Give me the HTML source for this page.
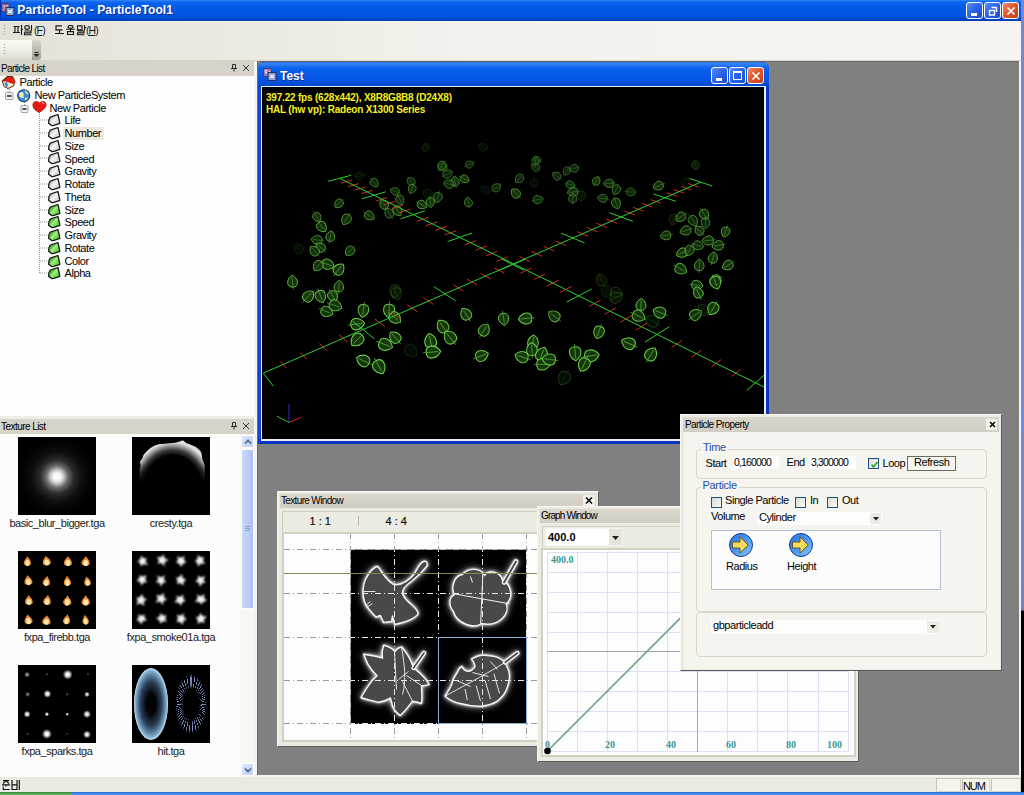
<!DOCTYPE html>
<html><head><meta charset="utf-8">
<style>
*{margin:0;padding:0;box-sizing:border-box}
html,body{width:1024px;height:795px;overflow:hidden;background:#808080;font-family:"Liberation Sans",sans-serif;font-size:11px;color:#000}
.a{position:absolute}
#title{left:0;top:0;width:1021px;height:21px;background:linear-gradient(#3d8af7 0,#1a72f4 1px,#0a62ee 3px,#0058e6 10px,#0052dc 17px,#0046c8 19px,#003cb4 21px)}
.xpb{width:17px;height:17px;border:1px solid #fff;border-radius:3px;background:linear-gradient(135deg,#5a8cf8,#2a62e8 50%,#1a4ad0)}
.sp{height:14px;border:1px solid;border-color:#c8c6b8 #d8d6ca #d8d6ca #c8c6b8;background:#f4f3ee}
#rframe{left:1021px;top:0;width:3px;height:792px;background:linear-gradient(#7886d2 0,#7a88d4 51%,#6c8ae6 52%,#6c8ae6 54.5%,#7886d2 55.5%,#7480cc 77%,#000 77.2%,#000 100%)}
#bars{left:0;top:21px;width:1021px;height:40px;background:linear-gradient(90deg,#e4e2d7 0,#ecebe2 25%,#f3f2ed 47%,#f6f5f1 100%)}
#mdi{left:257px;top:61px;width:762px;height:714px;background:#808080;border-left:1px solid #6c6c6c;border-top:1px solid #6c6c6c}
#mdiedge{left:1019px;top:61px;width:2px;height:714px;background:#f4f3ee}
#left{left:0;top:61px;width:254px;height:716px;background:#fff}
#split{left:254px;top:61px;width:3px;height:716px;background:#f4f3ee}
#status{left:0;top:777px;width:1021px;height:15px;background:linear-gradient(#ebeae1 0,#ecebe3)}
#task{left:0;top:792px;width:1024px;height:3px;background:#1a6ee0}
.hdr{background:#d7d3c8;height:15px;width:254px;left:0}
.tree{font-size:11px;letter-spacing:-0.45px;white-space:nowrap;line-height:13px;margin-left:0.6px}
.th{width:78px;height:78px}
.lbl{font-size:11px;letter-spacing:-0.45px;color:#222;text-align:center;white-space:nowrap;line-height:13px}
.win{background:#ecebe3;border:1px solid;border-color:#f8f7f3 #5e5d55 #5e5d55 #f8f7f3}
.ttl{background:linear-gradient(#dad6cc,#d2cec2)}
.ttl span{font-size:10px;letter-spacing:-0.65px;white-space:nowrap}
.tb{font-size:11px;letter-spacing:0px;color:#111;white-space:nowrap;-webkit-text-stroke:0.2px #111}
.grp{border:1px solid #d8d6ca;border-radius:4px}
.glbl{font-size:11px;color:#2250a8;background:#f5f4ef;padding:0 2px;letter-spacing:-0.3px;line-height:13px}
.dl{font-size:11px;letter-spacing:-0.45px;white-space:nowrap;line-height:14px}
.fld{height:13px;background:#fff;font-size:10.5px;letter-spacing:-0.85px;line-height:14px;padding-left:1px;white-space:nowrap}
.cb{width:11px;height:11px;border:1px solid #1c5180;background:linear-gradient(135deg,#dcdcd4,#fafaf8)}
.hdr span{position:absolute;left:2px;top:1px;font-size:11px;color:#000}
</style></head><body>
<div id="title" class="a"></div>
<div id="rframe" class="a"></div>
<div id="bars" class="a"></div>
<div id="mdi" class="a"></div>
<div id="mdiedge" class="a"></div>
<div id="left" class="a"></div>
<div id="split" class="a"></div>
<!-- LEFT PANEL -->
<div class="a hdr" style="top:61px"><span style="left:1px;top:2px;font-size:10px;letter-spacing:-0.62px">Particle List</span>
<svg class="a" style="left:227px;top:2px" width="24" height="11"><path d="M5.5 1.5h3M5.5 1.5v4M8.5 1.5v4M4 5.5h6M7 5.5v3" stroke="#2a2a2a" stroke-width="1" fill="none"/><path d="M16 2l6 6M22 2l-6 6" stroke="#3a3a3a" stroke-width="1"/></svg></div>
<div class="a" style="left:0;top:76px;width:254px;height:340px;background:#fdfdfd"></div>
<svg class="a" style="left:0;top:75px" width="254" height="210">
<defs>
<linearGradient id="gg" x1="0" y1="0" x2="1" y2="1"><stop offset="0" stop-color="#9a9a9a"/><stop offset=".5" stop-color="#f2f2f2"/><stop offset="1" stop-color="#bdbdbd"/></linearGradient>
<linearGradient id="gr" x1="0" y1="0" x2="1" y2="1"><stop offset="0" stop-color="#1c9a08"/><stop offset=".55" stop-color="#8ee868"/><stop offset="1" stop-color="#28b010"/></linearGradient>
<symbol id="lf" viewBox="0 0 13 13"><path d="M1.2 6.2L2.6 3.6L10.2 1L12.3 9.8L4.6 12.4L0.9 9.8Z" stroke="#1a1a1a" stroke-width="1.3" stroke-linejoin="round"/><path d="M3.5 9.5L9.5 3" stroke="#fff" stroke-opacity=".35" stroke-width="1.5"/></symbol>
</defs>
<g stroke="#9a9a9a" stroke-width="1" stroke-dasharray="1 1" fill="none">
<path d="M9.5 14v10M24.5 27v9M39.5 37v162M40 45h8M40 58h8M40 71h8M40 83h8M40 96h8M40 109h8M40 122h8M40 135h8M40 147h8M40 160h8M40 173h8M40 186h8M40 198h8"/>
</g>
<!-- expanders -->
<g><rect x="5.5" y="17.5" width="7.5" height="7" rx="1" fill="#eef0f2" stroke="#98a4b0"/><path d="M7 21h4.5" stroke="#222" stroke-width="1.5"/>
<rect x="21" y="30.5" width="7" height="7" rx="1" fill="#eef0f2" stroke="#98a4b0"/><path d="M22.5 34h4" stroke="#222" stroke-width="1.5"/></g>
<!-- Particle icon -->
<path d="M2.5 6.5L7.5 1.5L13 2L15 6.5L13.5 11L8 13.5L4 11.5Z" fill="#f4ecd8" stroke="#5a2a10" stroke-width="1"/>
<path d="M2.5 6.5L7.5 1.5L13 2L15 6.5L13.5 9L10 8L6 6.5Z" fill="#e02010"/><path d="M4.5 8l2.5 -1l1 4l-2 1z" fill="#3a80d8"/><path d="M2 6.5L7.5 1.5L13 2" stroke="#701800" stroke-width="1.2" fill="none"/>
<!-- globe -->
<circle cx="23.7" cy="20.7" r="6" fill="#3c8ad8" stroke="#123a70" stroke-width="1.1"/><path d="M19 18.5c1.5-2 3.5-2 4.5-0.5s-1 3 0.5 4.5c-1.5 1-3.5 0.5-4.8-1.2zM24.5 15.5c2 0 3.8 1.8 4 4c-1.2 0.2-2.2-0.8-2.5-1.8zM25 23c1 0 2.5-0.5 3-1.5c0 2-1.5 3.5-3 4z" fill="#f0eea0"/>
<!-- heart -->
<path d="M33 30.5c-0.5-3 2-4.5 4.5-3.8c1 0.3 1.5 0.8 2 1.3c1.5-1.8 4.5-2.3 6-0.3c1.2 1.8 0.5 4-1.2 5.8c-1.5 1.5-3.5 3-5.2 4c-2.2-1-4.5-2.8-5.5-4.5c-0.4-0.8-0.6-1.6-0.6-2.5z" fill="#e81810" stroke="#a01008" stroke-width="0.8"/><path d="M41.5 27.5c1.2 0 2.2 0.6 2.6 1.6" stroke="#ffb0a0" stroke-width="1.2" fill="none"/>
<g transform="translate(47.7,38.5)"><use href="#lf" width="13" height="13" fill="url(#gg)"/></g>
<g transform="translate(47.7,51.5)"><use href="#lf" width="13" height="13" fill="url(#gg)"/></g>
<g transform="translate(47.7,64.5)"><use href="#lf" width="13" height="13" fill="url(#gg)"/></g>
<g transform="translate(47.7,76.5)"><use href="#lf" width="13" height="13" fill="url(#gg)"/></g>
<g transform="translate(47.7,89.5)"><use href="#lf" width="13" height="13" fill="url(#gg)"/></g>
<g transform="translate(47.7,102.5)"><use href="#lf" width="13" height="13" fill="url(#gg)"/></g>
<g transform="translate(47.7,115.5)"><use href="#lf" width="13" height="13" fill="url(#gg)"/></g>
<g transform="translate(47.7,128.5)"><use href="#lf" width="13" height="13" fill="url(#gr)"/></g>
<g transform="translate(47.7,140.5)"><use href="#lf" width="13" height="13" fill="url(#gr)"/></g>
<g transform="translate(47.7,153.5)"><use href="#lf" width="13" height="13" fill="url(#gr)"/></g>
<g transform="translate(47.7,166.5)"><use href="#lf" width="13" height="13" fill="url(#gr)"/></g>
<g transform="translate(47.7,179.5)"><use href="#lf" width="13" height="13" fill="url(#gr)"/></g>
<g transform="translate(47.7,191.5)"><use href="#lf" width="13" height="13" fill="url(#gr)"/></g>
</svg>
<div class="a" style="left:63px;top:127px;width:41px;height:13px;background:#ebe9de"></div>
<div class="a tree" style="left:19px;top:76px">Particle</div>
<div class="a tree" style="left:34px;top:89px">New ParticleSystem</div>
<div class="a tree" style="left:49px;top:102px">New Particle</div>
<div class="a tree" style="left:64px;top:114px">Life</div>
<div class="a tree" style="left:64px;top:127px">Number</div>
<div class="a tree" style="left:64px;top:140px">Size</div>
<div class="a tree" style="left:64px;top:153px">Speed</div>
<div class="a tree" style="left:64px;top:165px">Gravity</div>
<div class="a tree" style="left:64px;top:178px">Rotate</div>
<div class="a tree" style="left:64px;top:191px">Theta</div>
<div class="a tree" style="left:64px;top:204px">Size</div>
<div class="a tree" style="left:64px;top:216px">Speed</div>
<div class="a tree" style="left:64px;top:229px">Gravity</div>
<div class="a tree" style="left:64px;top:242px">Rotate</div>
<div class="a tree" style="left:64px;top:255px">Color</div>
<div class="a tree" style="left:64px;top:267px">Alpha</div>

<div class="a" style="left:0;top:416px;width:254px;height:3px;background:#efeee6"></div>
<div class="a hdr" style="top:419px"><span style="left:1px;top:2px;font-size:10px;letter-spacing:-0.55px">Texture List</span>
<svg class="a" style="left:227px;top:2px" width="24" height="11"><path d="M5.5 1.5h3M5.5 1.5v4M8.5 1.5v4M4 5.5h6M7 5.5v3" stroke="#2a2a2a" stroke-width="1" fill="none"/><path d="M16 2l6 6M22 2l-6 6" stroke="#3a3a3a" stroke-width="1"/></svg></div>
<div class="a" style="left:0;top:434px;width:254px;height:343px;background:#fcfcfc"></div>
<!-- thumbnails -->
<div class="a th" style="left:18px;top:437px;background:radial-gradient(circle at 50% 51%,#fff 0,#f2f2f2 4px,#c0c0c0 7px,#6a6a6a 11px,#2a2a2a 17px,#0e0e0e 25px,#040404 33px,#000 40px)"></div>
<div class="a th" style="left:132px;top:437px;background:#000"><svg width="78" height="78" style="position:absolute;left:0;top:0"><defs><radialGradient id="cr" cx="40.5" cy="50" r="40" gradientUnits="userSpaceOnUse" gradientTransform="translate(40.5 50) scale(1 1.12) translate(-40.5 -50)"><stop offset="0" stop-color="#000"/><stop offset=".71" stop-color="#000"/><stop offset=".83" stop-color="#3c3c3c"/><stop offset=".93" stop-color="#a0a0a0"/><stop offset="1" stop-color="#e0e0e0"/></radialGradient><linearGradient id="crf" x1="0" y1="0" x2="0" y2="1"><stop offset="0" stop-color="#000" stop-opacity="0"/><stop offset=".55" stop-color="#000" stop-opacity="0"/><stop offset="1" stop-color="#000" stop-opacity="1"/></linearGradient></defs>
<path d="M7.7 46L7.7 33C8 30 9 29 8.5 27C8 26 8 25 8.2 24.5C10 22 11 21 11 19C12 17 13 16 14.4 14.7C17 12 20 10 22.7 8.6C25 7.5 27 7 28.9 7C35 6.5 40 6 44.3 5.5C47 5 49 3.5 50.5 3.4C52 3.5 53 5 54.1 6C58 7.5 61 8.5 63.9 10C66 12 68 13 69.1 15.2C70 18 70 20 70.1 21.4C71 24 72 26 72.7 28.6L72.5 46Z" fill="url(#cr)"/><rect x="0" y="0" width="78" height="47" fill="url(#crf)"/></svg></div>
<div class="a lbl" style="left:9px;top:517px;width:96px">basic_blur_bigger.tga</div>
<div class="a lbl" style="left:121px;top:517px;width:100px">cresty.tga</div>
<div class="a th" style="left:18px;top:551px;background:#000"><svg width="78" height="78" style="position:absolute;left:0;top:0"><defs><filter id="fb"><feGaussianBlur stdDeviation="0.6"/></filter></defs><g filter="url(#fb)"><g transform="translate(9.5 10.5) rotate(4)"><path d="M-3.6 2C-3.6 -2 -1 -3 -0.5 -5.6C1 -3 3.6 -2 3.6 2C3.6 5 -3.6 5 -3.6 2Z" fill="#e88a30"/><ellipse cx="0" cy="1.5" rx="2.1" ry="3.1" fill="#ffe4a8"/></g><g transform="translate(28.6 10.0) rotate(-8)"><path d="M-4.0 2C-4.0 -2 -1 -3 -0.5 -5.3C1 -3 4.0 -2 4.0 2C4.0 5 -4.0 5 -4.0 2Z" fill="#e88a30"/><ellipse cx="0" cy="1.5" rx="2.4" ry="2.9" fill="#ffe4a8"/></g><g transform="translate(50.0 10.5) rotate(4)"><path d="M-4.0 2C-4.0 -2 -1 -3 -0.5 -5.5C1 -3 4.0 -2 4.0 2C4.0 5 -4.0 5 -4.0 2Z" fill="#e88a30"/><ellipse cx="0" cy="1.5" rx="2.4" ry="3.0" fill="#ffe4a8"/></g><g transform="translate(67.8 10.6) rotate(7)"><path d="M-4.1 2C-4.1 -2 -1 -3 -0.5 -5.5C1 -3 4.1 -2 4.1 2C4.1 5 -4.1 5 -4.1 2Z" fill="#e88a30"/><ellipse cx="0" cy="1.5" rx="2.4" ry="3.0" fill="#ffe4a8"/></g><g transform="translate(10.3 29.6) rotate(-6)"><path d="M-4.0 2C-4.0 -2 -1 -3 -0.5 -5.6C1 -3 4.0 -2 4.0 2C4.0 5 -4.0 5 -4.0 2Z" fill="#e88a30"/><ellipse cx="0" cy="1.5" rx="2.4" ry="3.1" fill="#ffe4a8"/></g><g transform="translate(28.6 30.4) rotate(11)"><path d="M-3.7 2C-3.7 -2 -1 -3 -0.5 -5.7C1 -3 3.7 -2 3.7 2C3.7 5 -3.7 5 -3.7 2Z" fill="#e88a30"/><ellipse cx="0" cy="1.5" rx="2.2" ry="3.1" fill="#ffe4a8"/></g><g transform="translate(49.4 30.4) rotate(-2)"><path d="M-3.6 2C-3.6 -2 -1 -3 -0.5 -5.8C1 -3 3.6 -2 3.6 2C3.6 5 -3.6 5 -3.6 2Z" fill="#e88a30"/><ellipse cx="0" cy="1.5" rx="2.2" ry="3.2" fill="#ffe4a8"/></g><g transform="translate(69.4 30.4) rotate(-8)"><path d="M-3.3 2C-3.3 -2 -1 -3 -0.5 -5.1C1 -3 3.3 -2 3.3 2C3.3 5 -3.3 5 -3.3 2Z" fill="#e88a30"/><ellipse cx="0" cy="1.5" rx="2.0" ry="2.8" fill="#ffe4a8"/></g><g transform="translate(10.9 49.4) rotate(0)"><path d="M-3.8 2C-3.8 -2 -1 -3 -0.5 -5.3C1 -3 3.8 -2 3.8 2C3.8 5 -3.8 5 -3.8 2Z" fill="#e88a30"/><ellipse cx="0" cy="1.5" rx="2.3" ry="2.9" fill="#ffe4a8"/></g><g transform="translate(29.3 49.4) rotate(12)"><path d="M-3.8 2C-3.8 -2 -1 -3 -0.5 -5.6C1 -3 3.8 -2 3.8 2C3.8 5 -3.8 5 -3.8 2Z" fill="#e88a30"/><ellipse cx="0" cy="1.5" rx="2.3" ry="3.1" fill="#ffe4a8"/></g><g transform="translate(49.4 49.9) rotate(5)"><path d="M-4.1 2C-4.1 -2 -1 -3 -0.5 -6.0C1 -3 4.1 -2 4.1 2C4.1 5 -4.1 5 -4.1 2Z" fill="#e88a30"/><ellipse cx="0" cy="1.5" rx="2.4" ry="3.3" fill="#ffe4a8"/></g><g transform="translate(67.8 49.9) rotate(2)"><path d="M-4.2 2C-4.2 -2 -1 -3 -0.5 -5.9C1 -3 4.2 -2 4.2 2C4.2 5 -4.2 5 -4.2 2Z" fill="#e88a30"/><ellipse cx="0" cy="1.5" rx="2.5" ry="3.2" fill="#ffe4a8"/></g><g transform="translate(10.4 68.7) rotate(-6)"><path d="M-4.0 2C-4.0 -2 -1 -3 -0.5 -5.6C1 -3 4.0 -2 4.0 2C4.0 5 -4.0 5 -4.0 2Z" fill="#e88a30"/><ellipse cx="0" cy="1.5" rx="2.4" ry="3.1" fill="#ffe4a8"/></g><g transform="translate(28.6 69.4) rotate(9)"><path d="M-4.2 2C-4.2 -2 -1 -3 -0.5 -5.1C1 -3 4.2 -2 4.2 2C4.2 5 -4.2 5 -4.2 2Z" fill="#e88a30"/><ellipse cx="0" cy="1.5" rx="2.5" ry="2.8" fill="#ffe4a8"/></g><g transform="translate(48.8 68.7) rotate(11)"><path d="M-3.5 2C-3.5 -2 -1 -3 -0.5 -5.8C1 -3 3.5 -2 3.5 2C3.5 5 -3.5 5 -3.5 2Z" fill="#e88a30"/><ellipse cx="0" cy="1.5" rx="2.1" ry="3.2" fill="#ffe4a8"/></g><g transform="translate(67.6 69.1) rotate(-5)"><path d="M-3.2 2C-3.2 -2 -1 -3 -0.5 -5.7C1 -3 3.2 -2 3.2 2C3.2 5 -3.2 5 -3.2 2Z" fill="#e88a30"/><ellipse cx="0" cy="1.5" rx="1.9" ry="3.1" fill="#ffe4a8"/></g></g></svg></div>
<div class="a th" style="left:132px;top:551px;background:#000"><svg width="78" height="78" style="position:absolute;left:0;top:0"><defs><filter id="sm"><feGaussianBlur stdDeviation="1.3"/></filter></defs><g filter="url(#sm)" fill="#f0f0f0"><polygon points="15.9,14.2 11.5,13.1 9.0,15.2 8.0,12.1 5.5,10.2 8.3,8.6 8.9,4.8 11.6,7.2 14.9,7.2 13.4,10.3"/><polygon points="32.4,15.2 29.3,12.1 25.6,12.8 27.0,9.4 25.0,5.9 28.9,6.2 31.6,3.5 32.6,7.2 36.6,8.9 32.7,10.9"/><polygon points="54.2,11.5 51.0,12.7 49.0,15.7 47.1,12.4 44.0,11.5 46.0,9.0 45.3,5.1 48.8,7.1 52.4,4.9 51.9,8.8"/><polygon points="72.9,13.1 68.8,12.5 66.1,15.6 65.2,11.8 62.7,9.9 65.5,8.2 65.7,4.0 68.7,6.3 72.1,6.3 70.9,9.6"/><polygon points="15.1,31.2 11.6,31.4 9.3,34.6 8.1,30.8 4.6,29.7 7.2,27.2 7.8,24.2 10.6,25.6 14.5,24.3 13.1,28.2"/><polygon points="34.2,31.1 30.9,31.9 29.1,35.6 27.4,31.8 23.8,31.3 26.2,28.6 25.3,24.4 29.0,26.4 32.7,24.3 31.8,28.6"/><polygon points="51.3,34.4 48.2,32.1 45.0,32.9 45.6,29.7 44.0,26.7 47.2,26.2 49.8,23.0 50.8,27.2 54.2,28.4 51.7,30.8"/><polygon points="73.5,31.7 70.2,32.1 68.0,35.7 66.7,31.6 63.2,30.6 66.0,28.2 65.9,24.5 69.1,26.5 73.1,24.7 71.5,28.9"/><polygon points="12.2,55.1 8.7,52.2 4.6,53.8 5.8,49.7 4.4,46.7 7.7,46.2 10.2,42.9 11.5,46.9 15.0,48.3 11.8,50.6"/><polygon points="35.2,48.6 31.5,50.0 30.7,54.2 28.2,50.6 23.7,51.4 26.0,47.8 24.3,43.8 28.5,44.7 31.8,42.1 32.0,46.4"/><polygon points="53.6,50.1 50.4,51.3 48.8,54.8 46.7,51.5 42.3,51.5 45.1,48.2 44.5,44.7 47.9,46.0 51.5,43.4 51.1,47.6"/><polygon points="74.7,49.7 71.1,50.9 69.3,53.6 67.2,51.1 62.9,50.7 65.7,47.4 64.9,43.4 68.8,45.5 72.2,43.1 72.1,47.0"/><polygon points="14.8,69.6 11.0,70.1 9.1,73.4 7.3,70.3 4.4,69.1 6.7,66.7 6.3,63.3 9.3,64.8 12.4,63.5 12.6,66.6"/><polygon points="34.6,70.6 31.0,70.2 28.3,72.7 27.4,69.2 24.1,67.3 27.6,65.6 28.4,62.2 31.0,64.5 34.4,64.2 33.2,67.3"/><polygon points="54.7,68.3 51.6,69.8 50.6,73.7 48.0,70.9 44.4,70.7 46.0,67.5 44.8,63.8 48.7,64.8 51.6,62.6 52.0,66.2"/><polygon points="72.5,72.3 69.0,70.8 65.7,72.9 65.8,69.1 63.8,66.6 66.9,65.5 68.4,62.1 70.6,65.0 74.9,65.4 71.8,68.6"/></g></svg></div>
<div class="a lbl" style="left:9px;top:631px;width:96px">fxpa_firebb.tga</div>
<div class="a lbl" style="left:121px;top:631px;width:100px">fxpa_smoke01a.tga</div>
<div class="a th" style="left:18px;top:665px;background:radial-gradient(circle 3.0px at 9.1px 9.6px,#888 0,#888 30%,transparent 100%),radial-gradient(circle 1.5px at 28.9px 9.1px,#444 0,#444 30%,transparent 100%),radial-gradient(circle 5.0px at 49.7px 9.6px,#fff 0,#fff 30%,transparent 100%),radial-gradient(circle 1.5px at 70.0px 9.1px,#444 0,#444 30%,transparent 100%),radial-gradient(circle 2.5px at 9.6px 29.4px,#777 0,#777 30%,transparent 100%),radial-gradient(circle 4.0px at 29.4px 28.9px,#f4f4f4 0,#f4f4f4 30%,transparent 100%),radial-gradient(circle 1.5px at 49.2px 29.4px,#555 0,#555 30%,transparent 100%),radial-gradient(circle 2.8px at 69.0px 29.4px,#ddd 0,#ddd 30%,transparent 100%),radial-gradient(circle 3.5px at 9.1px 49.2px,#f0f0f0 0,#f0f0f0 30%,transparent 100%),radial-gradient(circle 2.2px at 28.9px 49.2px,#eee 0,#eee 30%,transparent 100%),radial-gradient(circle 1.8px at 49.2px 49.2px,#ddd 0,#ddd 30%,transparent 100%),radial-gradient(circle 4.0px at 69.0px 49.2px,#eee 0,#eee 30%,transparent 100%),radial-gradient(circle 1.5px at 9.6px 69.0px,#444 0,#444 30%,transparent 100%),radial-gradient(circle 5.0px at 28.9px 69.0px,#fff 0,#fff 30%,transparent 100%),radial-gradient(circle 1.5px at 49.2px 69.0px,#333 0,#333 30%,transparent 100%),radial-gradient(circle 4.0px at 69.0px 69.5px,#e8e8e8 0,#e8e8e8 30%,transparent 100%),#000"></div>
<div class="a th" style="left:132px;top:665px;background:#000;overflow:hidden">
 <div class="a" style="left:1.5px;top:3px;width:34.5px;height:72px;border-radius:50%;background:radial-gradient(ellipse 50% 50% at 50% 50%,#000 0,#03070c 30%,#2a4058 62%,#6890b0 84%,#9ac0dc 95%,#e0f0ff 100%);"></div>
 <div class="a" style="left:43px;top:9px;width:31.5px;height:60px;border-radius:50%;background:repeating-conic-gradient(from 0deg,#8098d0 0 2deg,transparent 2deg 7deg);-webkit-mask:radial-gradient(ellipse 50% 50%,transparent 50%,rgba(0,0,0,.8) 64%,#000 85%,transparent 100%)"></div>
</div>
<div class="a lbl" style="left:9px;top:745px;width:96px">fxpa_sparks.tga</div>
<div class="a lbl" style="left:121px;top:745px;width:100px">hit.tga</div>
<!-- scrollbar -->
<div class="a" style="left:240px;top:434px;width:14px;height:343px;background:#f7f7f3"></div>
<div class="a" style="left:241px;top:435px;width:13px;height:13px;border-radius:2px;background:linear-gradient(135deg,#dde8fb,#b8cdf5);border:1px solid #fff"><svg class="a" style="left:2px;top:3px" width="8" height="6"><path d="M1 4.5L4 1.5L7 4.5" stroke="#4d6185" stroke-width="1.6" fill="none"/></svg></div>
<div class="a" style="left:241px;top:449px;width:13px;height:160px;border-radius:2px;background:linear-gradient(90deg,#c9d8fa,#b9cdf6 60%,#a9bff0);border:1px solid #fff"><div class="a" style="left:3px;top:76px;width:5px;height:6px;background:repeating-linear-gradient(#8aa0d0 0 1px,transparent 1px 2px)"></div></div>
<div class="a" style="left:241px;top:763px;width:13px;height:13px;border-radius:2px;background:linear-gradient(135deg,#dde8fb,#b8cdf5);border:1px solid #fff"><svg class="a" style="left:2px;top:3px" width="8" height="6"><path d="M1 1.5L4 4.5L7 1.5" stroke="#4d6185" stroke-width="1.6" fill="none"/></svg></div>

<div id="status" class="a"></div>
<div class="a" style="left:257px;top:775px;width:764px;height:2px;background:#f7f6f2"></div>
<!-- TITLE -->
<div class="a" style="left:0;top:0;width:1px;height:21px;background:#0030b0"></div>
<svg class="a" style="left:1px;top:3px" width="14" height="13">
<rect x="0.5" y="0.5" width="8" height="8" fill="#8a6a9a" stroke="#5a3a6a"/><path d="M2 3h2M5 3h2M3 5h3M2 7h1M6 7h1" stroke="#f0e0f0"/>
<rect x="5" y="4.5" width="8" height="8" fill="#8fa0c8" stroke="#20306a"/><path d="M7 7l4 3M11 7l-4 3" stroke="#f4f8ff" stroke-width="1.2"/>
</svg>
<div class="a" style="left:17.3px;top:3px;font-size:12px;font-weight:bold;color:#fff;white-space:nowrap;letter-spacing:0.1px;text-shadow:1px 1px 0 #0a2a90">ParticleTool - ParticleTool1</div>
<!-- title buttons -->
<div class="a xpb" style="left:966px;top:2px"><div class="a" style="left:4px;top:10px;width:6px;height:3px;background:#fff"></div></div>
<div class="a xpb" style="left:984px;top:2px"><svg class="a" style="left:3px;top:3px" width="10" height="10"><path d="M3.5 1.5h5v4.5M1.5 4.5h5v4.5h-5z" stroke="#fff" stroke-width="1.4" fill="none"/></svg></div>
<div class="a xpb" style="left:1002px;top:2px;background:linear-gradient(135deg,#f08a6a,#e05a30 45%,#c83a10)"><svg class="a" style="left:3px;top:3px" width="10" height="10"><path d="M1.5 1.5l7 7M8.5 1.5l-7 7" stroke="#fff" stroke-width="1.7"/></svg></div>
<!-- MENU / TOOLBAR -->
<div class="a" style="left:0;top:21px;width:1021px;height:1px;background:#f4f3ee"></div>
<div class="a" style="left:0;top:60px;width:1021px;height:1px;background:#d8d6cb"></div>
<svg class="a" style="left:3px;top:24px" width="3" height="12"><path d="M1.5 1v1M1.5 4v1M1.5 7v1M1.5 10v1" stroke="#a8a79a" stroke-width="1.3"/></svg>
<svg class="a" style="left:13px;top:25px" width="32" height="11" fill="none" stroke="#1a1a1a" stroke-width="1.15">
<path d="M0.5 1.5h6M2 1.5v6M5 1.5v6M0 7.5h7M8.5 0v10M8.5 4.5h1.5"/>
<ellipse cx="14" cy="2.5" rx="2.3" ry="1.9"/><path d="M18.5 0v5.5M11.5 6h6.5v1.8h-6.5v1.9h7"/>
</svg>
<div class="a" style="left:34px;top:24px;font-size:10.5px;letter-spacing:-0.9px;white-space:nowrap;color:#1a1a1a">(<u>F</u>)</div>
<svg class="a" style="left:55px;top:25px" width="32" height="11" fill="none" stroke="#1a1a1a" stroke-width="1.15">
<path d="M7 0.8h-6v4h6.5M4.5 5v3M0 8.5h9"/>
<ellipse cx="15.5" cy="1.8" rx="2.5" ry="1.5"/><path d="M11 4.2h9M15.5 4.2v1.8M12.5 6.6h6v2.9h-6z"/>
<path d="M22.5 0.8h4.5v4h-4.5zM29.5 0v5.5M29.5 2.6h1.8M22.5 6h6.5v1.8h-6.5v1.9h7"/>
</svg>
<div class="a" style="left:86px;top:24px;font-size:10.5px;letter-spacing:-0.9px;white-space:nowrap;color:#1a1a1a">(<u>H</u>)</div>
<!-- tiny toolbar -->
<div class="a" style="left:0;top:40px;width:41px;height:20px;border-radius:0 3px 3px 0;background:linear-gradient(#fbfbf6,#f0efe6 50%,#d9d8cb);overflow:hidden">
 <div class="a" style="left:32px;top:0;width:9px;height:20px;background:linear-gradient(#d8d7c8,#b8b7a6 60%,#a3a290)"></div>
 <svg class="a" style="left:33px;top:11px" width="7" height="7"><path d="M1.5 1.5h4" stroke="#222"/><path d="M0.5 3h6l-3 3z" fill="#222"/></svg>
 <svg class="a" style="left:3px;top:42px" width="3" height="14"></svg>
</div>
<svg class="a" style="left:3px;top:43px" width="3" height="14"><path d="M1.5 1v1M1.5 4v1M1.5 7v1M1.5 10v1" stroke="#a8a79a" stroke-width="1.3"/></svg>
<!-- STATUS -->
<svg class="a" style="left:2px;top:780px" width="18" height="10" fill="none" stroke="#111" stroke-width="1.15">
<path d="M1 0.6h6M4 0.6L1 3.6M4 0.6l3 3M0 4.8h8M4 4.8v1.6M1.2 6.5v3h6.5"/>
<path d="M10 0v9.5h5v-9.5M10 4.8h5M17.3 0v10"/>
</svg>
<div class="a sp" style="left:936px;top:778px;width:25px"></div>
<div class="a sp" style="left:962px;top:778px;width:28px"><span class="a" style="left:0px;top:0.5px;font-size:11px;letter-spacing:-1.1px">NUM</span></div>
<div class="a sp" style="left:991px;top:778px;width:30px"></div>
<div class="a" style="left:0;top:792px;width:72px;height:3px;background:linear-gradient(#2e7a2e 0,#4aa04a 1px,#6ab86a)"></div>
<div class="a" style="left:72px;top:792px;width:952px;height:3px;background:linear-gradient(#1e5ec8 0,#3a86e8 1px,#4a90ee)"></div>


<!-- TEST WINDOW -->
<div class="a" style="left:258px;top:62px;width:511px;height:382px;border-radius:6px 6px 0 0;background:linear-gradient(90deg,#0a30b0 0,#1a50e0 1px,#0c3cd0 3px,#0a36c8 4px,#0a36c8 calc(100% - 4px),#0c3cd0 calc(100% - 3px),#0a30b0 100%);overflow:hidden">
 <div class="a" style="left:0;top:0;width:511px;height:25px;background:linear-gradient(#1a4ac8 0,#3c8cf8 1px,#2a78f4 3px,#0a62ee 6px,#0658e8 14px,#0552e0 20px,#0446cc 24px,#0a40c0 25px)"></div>
 <div class="a" style="left:0;top:377px;width:511px;height:5px;background:linear-gradient(#0c3cd0,#0a36c8 3px,#0a30b0)"></div>
</div>
<div class="a" style="left:261px;top:86px;width:505px;height:355px;background:#e8ecf8"></div>
<svg class="a" style="left:263px;top:68px" width="14" height="13">
<rect x="0.5" y="0.5" width="8" height="8" fill="#9a78b0" stroke="#5a3a7a"/><path d="M2 3.5l2-1.5M2 3.5l2 2M5 4h2" stroke="#f8f0ff" stroke-width="1.1"/>
<rect x="5" y="4.5" width="8" height="8" fill="#8fa0d0" stroke="#20306a"/><path d="M7 7l4 3M11 7l-4 3" stroke="#f4f8ff" stroke-width="1.2"/>
</svg>
<div class="a" style="left:280px;top:69px;font-size:12px;font-weight:bold;color:#fff;white-space:nowrap;text-shadow:1px 1px 0 #0a2a90">Test</div>
<div class="a xpb" style="left:711px;top:67px"><div class="a" style="left:4px;top:10px;width:6px;height:3px;background:#fff"></div></div>
<div class="a xpb" style="left:729px;top:67px"><div class="a" style="left:3px;top:3px;width:9px;height:9px;border:1px solid #fff;border-top-width:2px"></div></div>
<div class="a xpb" style="left:747px;top:67px;background:linear-gradient(135deg,#f08a6a,#e05a30 45%,#c83a10)"><svg class="a" style="left:3px;top:3px" width="10" height="10"><path d="M1.5 1.5l7 7M8.5 1.5l-7 7" stroke="#fff" stroke-width="1.7"/></svg></div>
<div class="a" style="left:262px;top:87px;width:502px;height:352px;background:#000;overflow:hidden">
<svg class="a" style="left:0;top:0" width="502" height="352" id="scene"><defs><filter id="lb" x="-10%" y="-10%" width="120%" height="120%"><feGaussianBlur stdDeviation="0.35"/></filter><g id="leaf"><path d="M-6.5 0C-6.5 -7.5 3 -7.8 7.5 0C3 7.8 -6.5 7.5 -6.5 0Z" fill="#17380f" stroke="#6ccc48" stroke-width="1.05"/><path d="M-9.5 0H5" stroke="#52a836" stroke-width="0.8"/></g></defs>
<g filter="url(#lb)"><use href="#leaf" transform="translate(163.6 60.3) rotate(-63) scale(0.59)" opacity="0.25"/><use href="#leaf" transform="translate(221.0 60.0) rotate(-154) scale(0.63)" opacity="0.21"/><use href="#leaf" transform="translate(180.7 79.9) rotate(-159) scale(0.67)" opacity="0.59"/><use href="#leaf" transform="translate(207.5 77.4) rotate(-24) scale(0.61)" opacity="0.60"/><use href="#leaf" transform="translate(185.5 87.0) rotate(-27) scale(0.71)" opacity="0.62"/><use href="#leaf" transform="translate(193.0 94.5) rotate(-100) scale(0.70)" opacity="0.80"/><use href="#leaf" transform="translate(202.6 92.0) rotate(28) scale(0.67)" opacity="0.80"/><use href="#leaf" transform="translate(186.8 97.0) rotate(-163) scale(0.73)" opacity="0.68"/><use href="#leaf" transform="translate(149.0 94.5) rotate(-128) scale(0.65)" opacity="0.67"/><use href="#leaf" transform="translate(150.0 101.8) rotate(114) scale(0.67)" opacity="0.74"/><use href="#leaf" transform="translate(112.3 95.7) rotate(50) scale(0.68)" opacity="0.72"/><use href="#leaf" transform="translate(133.0 104.3) rotate(-157) scale(0.66)" opacity="0.67"/><use href="#leaf" transform="translate(138.0 112.8) rotate(65) scale(0.71)" opacity="0.71"/><use href="#leaf" transform="translate(166.0 106.7) rotate(31) scale(0.71)" opacity="0.20"/><use href="#leaf" transform="translate(175.8 110.4) rotate(106) scale(0.74)" opacity="0.69"/><use href="#leaf" transform="translate(159.9 117.7) rotate(27) scale(0.73)" opacity="0.83"/><use href="#leaf" transform="translate(168.5 115.3) rotate(83) scale(0.70)" opacity="0.85"/><use href="#leaf" transform="translate(122.0 117.7) rotate(-137) scale(0.72)" opacity="0.81"/><use href="#leaf" transform="translate(127.0 126.2) rotate(-125) scale(0.74)" opacity="0.68"/><use href="#leaf" transform="translate(135.5 123.8) rotate(61) scale(0.77)" opacity="0.79"/><use href="#leaf" transform="translate(76.9 116.5) rotate(135) scale(0.71)" opacity="0.80"/><use href="#leaf" transform="translate(107.4 128.7) rotate(34) scale(0.76)" opacity="0.77"/><use href="#leaf" transform="translate(84.2 132.3) rotate(122) scale(0.81)" opacity="0.78"/><use href="#leaf" transform="translate(55.0 130.0) rotate(59) scale(0.70)" opacity="0.82"/><use href="#leaf" transform="translate(59.8 139.7) rotate(53) scale(0.82)" opacity="0.87"/><use href="#leaf" transform="translate(68.4 149.4) rotate(-78) scale(0.77)" opacity="0.86"/><use href="#leaf" transform="translate(55.0 153.0) rotate(-172) scale(0.79)" opacity="0.76"/><use href="#leaf" transform="translate(58.6 160.4) rotate(-138) scale(0.76)" opacity="0.90"/><use href="#leaf" transform="translate(52.5 164.0) rotate(-133) scale(0.78)" opacity="0.83"/><use href="#leaf" transform="translate(87.9 164.0) rotate(134) scale(0.77)" opacity="0.84"/><use href="#leaf" transform="translate(65.9 177.5) rotate(18) scale(0.88)" opacity="0.94"/><use href="#leaf" transform="translate(56.0 178.7) rotate(131) scale(0.81)" opacity="0.86"/><use href="#leaf" transform="translate(76.9 182.4) rotate(-51) scale(0.89)" opacity="0.98"/><use href="#leaf" transform="translate(36.6 161.6) rotate(-126) scale(0.77)" opacity="0.19"/><use href="#leaf" transform="translate(30.5 194.6) rotate(-96) scale(0.86)" opacity="0.93"/><use href="#leaf" transform="translate(76.9 199.5) rotate(-85) scale(0.82)" opacity="0.91"/><use href="#leaf" transform="translate(46.4 209.2) rotate(-47) scale(0.90)" opacity="1.00"/><use href="#leaf" transform="translate(58.6 209.2) rotate(69) scale(0.89)" opacity="0.97"/><use href="#leaf" transform="translate(70.8 209.2) rotate(63) scale(0.84)" opacity="1.00"/><use href="#leaf" transform="translate(133.0 204.0) rotate(101) scale(0.92)" opacity="0.27"/><use href="#leaf" transform="translate(234.4 100.6) rotate(-39) scale(0.69)" opacity="0.65"/><use href="#leaf" transform="translate(223.4 103.0) rotate(48) scale(0.66)" opacity="0.17"/><use href="#leaf" transform="translate(206.3 115.3) rotate(-105) scale(0.69)" opacity="0.72"/><use href="#leaf" transform="translate(274.8 72.9) rotate(-161) scale(0.60)" opacity="0.60"/><use href="#leaf" transform="translate(273.6 80.3) rotate(-143) scale(0.65)" opacity="0.59"/><use href="#leaf" transform="translate(257.4 91.5) rotate(135) scale(0.70)" opacity="0.64"/><use href="#leaf" transform="translate(272.3 95.2) rotate(-89) scale(0.67)" opacity="0.21"/><use href="#leaf" transform="translate(253.7 106.3) rotate(-136) scale(0.75)" opacity="0.84"/><use href="#leaf" transform="translate(276.0 112.6) rotate(-12) scale(0.72)" opacity="0.67"/><use href="#leaf" transform="translate(294.7 89.0) rotate(-143) scale(0.66)" opacity="0.65"/><use href="#leaf" transform="translate(304.6 84.0) rotate(118) scale(0.63)" opacity="0.60"/><use href="#leaf" transform="translate(312.0 81.5) rotate(162) scale(0.67)" opacity="0.62"/><use href="#leaf" transform="translate(308.3 97.7) rotate(16) scale(0.64)" opacity="0.73"/><use href="#leaf" transform="translate(310.8 105.0) rotate(172) scale(0.75)" opacity="0.77"/><use href="#leaf" transform="translate(310.8 111.3) rotate(-86) scale(0.70)" opacity="0.68"/><use href="#leaf" transform="translate(319.5 108.8) rotate(98) scale(0.72)" opacity="0.27"/><use href="#leaf" transform="translate(334.4 94.0) rotate(-61) scale(0.66)" opacity="0.77"/><use href="#leaf" transform="translate(346.8 96.4) rotate(175) scale(0.73)" opacity="0.78"/><use href="#leaf" transform="translate(354.2 102.6) rotate(115) scale(0.73)" opacity="0.67"/><use href="#leaf" transform="translate(369.0 105.0) rotate(6) scale(0.69)" opacity="0.64"/><use href="#leaf" transform="translate(340.6 111.3) rotate(-170) scale(0.70)" opacity="0.70"/><use href="#leaf" transform="translate(354.2 116.3) rotate(69) scale(0.78)" opacity="0.75"/><use href="#leaf" transform="translate(396.4 98.9) rotate(157) scale(0.75)" opacity="0.81"/><use href="#leaf" transform="translate(423.7 95.2) rotate(-49) scale(0.66)" opacity="0.19"/><use href="#leaf" transform="translate(433.6 77.8) rotate(-109) scale(0.63)" opacity="0.25"/><use href="#leaf" transform="translate(418.7 130.0) rotate(144) scale(0.79)" opacity="0.78"/><use href="#leaf" transform="translate(431.1 133.6) rotate(55) scale(0.79)" opacity="0.71"/><use href="#leaf" transform="translate(442.3 127.4) rotate(58) scale(0.79)" opacity="0.84"/><use href="#leaf" transform="translate(443.5 136.0) rotate(90) scale(0.76)" opacity="0.73"/><use href="#leaf" transform="translate(411.3 132.4) rotate(104) scale(0.74)" opacity="0.27"/><use href="#leaf" transform="translate(403.8 148.5) rotate(170) scale(0.77)" opacity="0.80"/><use href="#leaf" transform="translate(423.7 143.6) rotate(161) scale(0.80)" opacity="0.75"/><use href="#leaf" transform="translate(437.3 143.6) rotate(-134) scale(0.74)" opacity="0.89"/><use href="#leaf" transform="translate(463.4 144.8) rotate(110) scale(0.74)" opacity="0.88"/><use href="#leaf" transform="translate(446.0 153.5) rotate(173) scale(0.81)" opacity="0.80"/><use href="#leaf" transform="translate(436.1 158.5) rotate(18) scale(0.76)" opacity="0.74"/><use href="#leaf" transform="translate(456.0 158.5) rotate(170) scale(0.82)" opacity="0.85"/><use href="#leaf" transform="translate(420.0 165.9) rotate(156) scale(0.81)" opacity="0.93"/><use href="#leaf" transform="translate(427.4 163.4) rotate(117) scale(0.78)" opacity="0.80"/><use href="#leaf" transform="translate(451.0 170.9) rotate(-75) scale(0.80)" opacity="0.88"/><use href="#leaf" transform="translate(437.3 178.3) rotate(-87) scale(0.83)" opacity="0.81"/><use href="#leaf" transform="translate(465.9 178.3) rotate(148) scale(0.82)" opacity="0.87"/><use href="#leaf" transform="translate(418.7 182.0) rotate(30) scale(0.89)" opacity="0.87"/><use href="#leaf" transform="translate(453.5 193.2) rotate(150) scale(0.86)" opacity="0.92"/><use href="#leaf" transform="translate(434.9 198.2) rotate(8) scale(0.82)" opacity="0.91"/><use href="#leaf" transform="translate(436.1 205.6) rotate(-114) scale(0.83)" opacity="1.00"/><use href="#leaf" transform="translate(339.3 193.2) rotate(-118) scale(0.86)" opacity="0.26"/><use href="#leaf" transform="translate(354.2 205.6) rotate(20) scale(0.87)" opacity="0.23"/><use href="#leaf" transform="translate(73.2 218.6) rotate(20) scale(0.94)" opacity="0.88"/><use href="#leaf" transform="translate(64.7 224.7) rotate(22) scale(0.89)" opacity="0.93"/><use href="#leaf" transform="translate(101.3 223.5) rotate(98) scale(0.92)" opacity="0.98"/><use href="#leaf" transform="translate(127.0 223.5) rotate(94) scale(0.96)" opacity="0.96"/><use href="#leaf" transform="translate(133.0 230.8) rotate(41) scale(0.93)" opacity="0.99"/><use href="#leaf" transform="translate(134.3 206.4) rotate(69) scale(0.88)" opacity="0.23"/><use href="#leaf" transform="translate(95.2 237.0) rotate(-8) scale(0.99)" opacity="1.00"/><use href="#leaf" transform="translate(95.2 252.8) rotate(136) scale(1.02)" opacity="0.98"/><use href="#leaf" transform="translate(123.3 257.7) rotate(21) scale(1.02)" opacity="1.00"/><use href="#leaf" transform="translate(133.0 250.4) rotate(-131) scale(0.92)" opacity="1.00"/><use href="#leaf" transform="translate(101.3 273.6) rotate(-154) scale(0.98)" opacity="0.99"/><use href="#leaf" transform="translate(117.2 279.7) rotate(61) scale(1.05)" opacity="1.00"/><use href="#leaf" transform="translate(180.7 239.4) rotate(-124) scale(0.97)" opacity="1.00"/><use href="#leaf" transform="translate(188.0 250.4) rotate(-129) scale(1.01)" opacity="1.00"/><use href="#leaf" transform="translate(168.5 254.0) rotate(-101) scale(1.02)" opacity="1.00"/><use href="#leaf" transform="translate(170.9 265.0) rotate(-5) scale(1.04)" opacity="1.00"/><use href="#leaf" transform="translate(203.9 227.2) rotate(-122) scale(0.91)" opacity="0.98"/><use href="#leaf" transform="translate(222.2 243.0) rotate(-58) scale(0.92)" opacity="0.97"/><use href="#leaf" transform="translate(241.7 232.0) rotate(80) scale(0.88)" opacity="1.00"/><use href="#leaf" transform="translate(219.7 268.7) rotate(-21) scale(0.94)" opacity="1.00"/><use href="#leaf" transform="translate(148.9 263.8) rotate(45) scale(0.99)" opacity="0.17"/><use href="#leaf" transform="translate(263.6 231.5) rotate(175) scale(0.96)" opacity="1.00"/><use href="#leaf" transform="translate(292.2 229.0) rotate(-142) scale(0.90)" opacity="0.89"/><use href="#leaf" transform="translate(344.3 204.2) rotate(100) scale(0.86)" opacity="0.18"/><use href="#leaf" transform="translate(354.2 210.4) rotate(-28) scale(0.94)" opacity="0.27"/><use href="#leaf" transform="translate(379.0 217.8) rotate(-87) scale(0.87)" opacity="1.00"/><use href="#leaf" transform="translate(376.5 229.0) rotate(25) scale(0.95)" opacity="0.90"/><use href="#leaf" transform="translate(397.6 225.3) rotate(-159) scale(0.94)" opacity="0.96"/><use href="#leaf" transform="translate(390.2 234.0) rotate(-154) scale(0.98)" opacity="0.25"/><use href="#leaf" transform="translate(336.8 245.1) rotate(109) scale(0.91)" opacity="1.00"/><use href="#leaf" transform="translate(366.6 256.3) rotate(-156) scale(1.01)" opacity="1.00"/><use href="#leaf" transform="translate(389.0 267.4) rotate(-58) scale(1.00)" opacity="1.00"/><use href="#leaf" transform="translate(271.1 255.0) rotate(-84) scale(0.93)" opacity="1.00"/><use href="#leaf" transform="translate(269.9 262.5) rotate(-94) scale(0.94)" opacity="0.98"/><use href="#leaf" transform="translate(259.9 269.9) rotate(-162) scale(0.96)" opacity="1.00"/><use href="#leaf" transform="translate(279.8 267.4) rotate(-70) scale(1.02)" opacity="1.00"/><use href="#leaf" transform="translate(281.0 277.4) rotate(0) scale(0.97)" opacity="1.00"/><use href="#leaf" transform="translate(287.2 272.4) rotate(-173) scale(0.97)" opacity="0.97"/><use href="#leaf" transform="translate(313.3 266.2) rotate(84) scale(1.00)" opacity="0.99"/><use href="#leaf" transform="translate(329.4 268.7) rotate(-9) scale(1.04)" opacity="0.98"/><use href="#leaf" transform="translate(322.0 277.4) rotate(115) scale(1.00)" opacity="1.00"/><use href="#leaf" transform="translate(302.1 291.0) rotate(120) scale(1.02)" opacity="0.23"/><use href="#leaf" transform="translate(453.5 195.5) rotate(68) scale(0.92)" opacity="0.88"/><use href="#leaf" transform="translate(451.0 221.5) rotate(120) scale(0.94)" opacity="0.99"/><use href="#leaf" transform="translate(433.6 227.7) rotate(-34) scale(0.91)" opacity="0.89"/><use href="#leaf" transform="translate(441.0 222.8) rotate(-133) scale(0.87)" opacity="0.26"/><use href="#leaf" transform="translate(273.4 73.9) rotate(-88) scale(0.62)" opacity="0.59"/><use href="#leaf" transform="translate(179.8 78.8) rotate(123) scale(0.70)" opacity="0.72"/><use href="#leaf" transform="translate(433.5 77.8) rotate(-79) scale(0.63)" opacity="0.20"/><use href="#leaf" transform="translate(98.0 89.0) rotate(-15) scale(0.64)" opacity="0.22"/></g>
<path d="M79.1 96.1l10.7 -2.9M85.9 99.6l10.8 -2.9M92.7 103.0l10.9 -3.0M99.5 106.5l10.9 -3.1M114.1 113.9l11.1 -3.3M121.9 117.8l11.1 -3.4M129.7 121.7l11.2 -3.5M137.5 125.7l11.2 -3.6M154.6 134.2l11.3 -3.7M164.0 138.7l11.3 -3.8M173.4 143.2l11.3 -3.8M182.8 147.8l11.3 -3.9M202.8 157.8l11.3 -4.1M213.4 163.3l11.3 -4.3M224.0 168.9l11.3 -4.5M234.6 174.4l11.3 -4.7M258.4 186.2l11.3 -5.1M271.7 192.5l11.4 -5.3M284.9 198.9l11.4 -5.5M298.2 205.2l11.5 -5.8M327.1 219.4l11.5 -6.2M342.7 227.3l11.4 -6.5M358.3 235.2l11.4 -6.7M373.9 243.1l11.3 -6.9M409.5 260.6l10.7 -7.2M429.5 270.3l10.1 -7.2M449.6 279.9l9.5 -7.3M469.6 289.5l8.9 -7.3M18.5 274.3l5.7 6.4M38.0 265.4l6.8 6.9M57.5 256.6l7.8 7.3M77.0 247.7l8.9 7.7M112.8 231.8l10.0 7.8M129.0 224.7l10.0 7.5M145.2 217.7l10.0 7.1M161.5 210.6l9.9 6.8M191.3 197.8l10.0 6.2M204.9 192.0l10.1 6.0M218.5 186.3l10.2 5.8M232.0 180.6l10.3 5.5M257.6 169.6l10.5 5.2M269.5 164.4l10.6 5.0M281.5 159.2l10.7 4.9M293.4 153.9l10.8 4.7M315.1 144.6l10.9 4.5M324.7 140.4l10.9 4.4M334.4 136.3l10.9 4.2M344.1 132.1l10.9 4.1M362.5 124.2l10.7 3.9M371.2 120.4l10.6 3.8M380.0 116.5l10.5 3.6M388.7 112.7l10.4 3.5M404.7 105.8l10.3 3.4M411.9 102.7l10.3 3.4M419.1 99.6l10.3 3.4M426.3 96.6l10.3 3.4M514.2 311.1l7.3 -6.9M538.2 323.3l7.3 -6.9" stroke="#d02a20" stroke-width="1" fill="none"/>
<path d="M77.6 91.3L618.0 357.0M66.1 94.3l23.0 -6.0M99.8 111.8l24.0 -7.0M138.6 131.8l24.5 -8.0M185.6 154.6l24.5 -8.6M238.5 182.8l24.5 -10.5M304.7 215.0l25.0 -13.0M382.9 255.2l24.5 -15.6M484.7 303.5l18.1 -16.0M1.3 286.1L438.6 95.2M1.3 286.1l10.0 13.0M90.7 234.1l21.7 17.8M171.9 199.7l21.6 14.0M239.5 171.8l22.5 11.5M299.0 146.0l23.6 10.0M347.4 125.7l23.6 8.7M391.4 106.9l22.4 7.4M427.5 91.4l22.3 7.5" stroke="#30cc30" stroke-width="1" fill="none"/>
<path d="M27 335.5V317" stroke="#2828c8" stroke-width="1"/><path d="M27 335.5L14.8 329" stroke="#28c028" stroke-width="1"/><path d="M27 335.5L39.5 330" stroke="#d02828" stroke-width="1"/></svg>
<div class="a" style="left:4px;top:5px;font-size:10px;font-weight:bold;color:#f4f020;line-height:12px;white-space:nowrap;letter-spacing:-0.2px">397.22 fps (628x442), X8R8G8B8 (D24X8)<br>HAL (hw vp): Radeon X1300 Series</div>
</div>
<!-- TEXTURE WINDOW -->
<div class="a win" style="left:277px;top:491px;width:322px;height:256px">
 <div class="a ttl" style="left:2px;top:2px;width:316px;height:14px"><span class="a" style="left:1px;top:1px">Texture Window</span>
  <div class="a" style="left:303px;top:1px;width:12px;height:11px;background:#f2f1ea"><svg class="a" style="left:2px;top:2px" width="8" height="7"><path d="M1 0.5l6 6M7 0.5l-6 6" stroke="#111" stroke-width="1.6"/></svg></div></div>
 <div class="a" style="left:4px;top:19px;width:316px;height:22px;background:#ecebe2;border-top:1px solid #d0cebf;border-left:1px solid #d0cebf"></div>
 <div class="a tb" style="left:31.5px;top:23px">1 : 1</div>
 <div class="a" style="left:80px;top:24px;width:1px;height:10px;background:#b8b6a8"></div>
 <div class="a tb" style="left:107.5px;top:23px">4 : 4</div>
 <div class="a" style="left:4px;top:40px;width:318px;height:210px;background:#fdfdfd;border:2px solid #d2d0c2;overflow:hidden">
  <svg class="a" style="left:-284px;top:-534px" width="600" height="760">
   <defs><filter id="glow" x="-20%" y="-20%" width="140%" height="140%"><feGaussianBlur in="SourceAlpha" stdDeviation="3.6" result="b"/><feFlood flood-color="#e8e8e8" flood-opacity="0.9"/><feComposite in2="b" operator="in" result="g"/><feGaussianBlur in="SourceGraphic" stdDeviation="1" result="s"/><feMerge><feMergeNode in="g"/><feMergeNode in="s"/><feMergeNode in="SourceGraphic"/></feMerge></filter>
   <clipPath id="imgc"><rect x="350.5" y="549.5" width="175.5" height="174.5"/></clipPath></defs>
   <rect x="350.5" y="549.5" width="175.5" height="174.5" fill="#000"/>
   <g transform="translate(350.5 549.5)" filter="url(#glow)" stroke="#f4f4f4" stroke-width="1.4" fill="#4a4a4a" stroke-linejoin="round">
    <path d="M26 17C22 19 18 24 15 30C12 36 12 46 14 52C16 58 21 63 25.5 67.5L30 66L33 73L41 72L42 66.5L44.3 75L52 73C56 72 62 70 67.5 65C68 62 66 60 63 57C58 53 53 48 52 44C51 40 55 36 62 31C67 27 72 22 76 17C78 14 76 11 73 12C69 14 67 19 64 24C60 30 52 35 45.4 35.4C40 35 34 27 30 21C29 19 28 17 26 17Z"/>
    <path d="M13 42L25 42M15 56L20 52M16 58L22 54" fill="none" stroke-width="0.9"/>
    <path d="M134 26C138 20 150 22 152 31C160 34 164 48 155.6 54.3C160 64 148 78 131 74C124 80 106 74 103 62C98 56 98 48 104 45C100 38 104 26 112 25C118 18 130 18 134 26Z"/>
    <path d="M153.5 33L165.5 12" fill="none" stroke-width="4.6" stroke-linecap="round"/><path d="M153.5 33L165.5 12" fill="none" stroke="#4a4a4a" stroke-width="1.8" stroke-linecap="round"/>
    <path d="M103.5 44.3L158.9 54.3M132.3 26.6L130.1 75.3M120 27L122 33" fill="none" stroke-width="1"/>
    <path d="M13.3 104.7C20 106 27 107 32 108.5C31 103 32 99 33.2 95.8C38 97 42 99 44.3 102C46 100 48 98 51 97.5C55 102 59 108 61 113L63 118.5C66 121 69 123 71 125.2C74 128 77 132 78.6 135.1C76 136 73 136 71 136.2C71 142 72 148 71 154C68 153 64 152 62 151.7C58 157 54 162 49.8 166.1C46 163 43 160 42 156.2L40 148.4C36 151 32 152 27.7 152.8C22 151 15 150 10.5 148C14 142 18 136 22 130.7L26.6 126.3C23 123 20 119 17.7 115.2C16 111 14 108 13.3 104.7Z"/>
    <path d="M63 118.5L73.5 103.5" fill="none" stroke-width="4.4" stroke-linecap="round"/><path d="M63 118.5L73.5 103.5" fill="none" stroke="#4a4a4a" stroke-width="1.6" stroke-linecap="round"/>
    <path d="M44 102L46 140M51 97.5C54 115 56 130 52 145M62 151.7L52 132M71 136L56 126M58 122L48 130" fill="none" stroke-width="0.9"/>
    <path d="M94.6 146.7C100 151 104 153 110 154C117 156 124 157 131 156.7C138 156 143 154 146.7 151.7C151 148 154 145 155.6 140.7C158 135 159 131 159 126.3C159 121 157 118 155.6 115.2L154.4 113C151 110 148 108 145.6 107.4C140 106 136 105.5 132 105.8C128 106 124 108 121 109.6C123 112 125 115 124.5 117.4C122 121 119 122 117 121.8C114 121 112 119 111.3 116.8C109 118 108 120 106.8 123C104 127 102 131 101.3 135C99 140 97 143 94.6 146.7Z"/>
    <path d="M154.4 113L166.9 103.5" fill="none" stroke-width="4.4" stroke-linecap="round"/><path d="M154.4 113L166.9 103.5" fill="none" stroke="#4a4a4a" stroke-width="1.6" stroke-linecap="round"/>
    <path d="M94.6 146.7C110 138 130 128 154.4 113M114.6 139.5L116.8 150.6M125.7 136L130 151.7M134.5 130.7L140 149.5M143.4 124L149 144M120 137L106 131M138 127L122 123M147 120L140 112" fill="none" stroke-width="0.9"/>
   </g>
   <g fill="none" stroke-width="1">
    <path d="M284 549.5H600M284 593.5H600M284 637.5H600M284 680.5H600M284 723.5H600" stroke="#9a9a9a" stroke-dasharray="6 3 1 3"/>
    <path d="M350.5 533V760M394.5 533V760M438.5 533V760M482.5 533V760M526.5 533V760" stroke="#9a9a9a" stroke-dasharray="6 3 1 3"/>
    <g clip-path="url(#imgc)">
    <path d="M284 549.5H600M284 593.5H600M284 637.5H600M284 680.5H600M284 723.5H600" stroke="#e8e8e8" stroke-dasharray="6 3 1 3"/>
    <path d="M350.5 533V760M394.5 533V760M438.5 533V760M482.5 533V760M526.5 533V760" stroke="#e8e8e8" stroke-dasharray="6 3 1 3"/>
    </g>
    <path d="M284 573.5H600" stroke="#7c8a58"/>
    <rect x="438.5" y="637.5" width="88" height="86" stroke="#8ab0d8"/>
   </g>
  </svg>
 </div>
</div>
<!-- GRAPH WINDOW -->
<div class="a win" style="left:537px;top:506px;width:322px;height:256px">
 <div class="a ttl" style="left:2px;top:2px;width:316px;height:14px"><span class="a" style="left:1px;top:1px;letter-spacing:-0.85px">Graph Window</span></div>
 <div class="a" style="left:4px;top:19px;width:316px;height:23px;background:#ecebe2;border-top:1px solid #d0cebf;border-left:1px solid #d0cebf"></div>
 <div class="a" style="left:7px;top:21px;width:78px;height:18px;background:#fff;border:1px solid #f4f3ee">
  <div class="a" style="left:2px;top:1.5px;font-size:11px;font-weight:bold">400.0</div>
  <div class="a" style="left:63px;top:0;width:13px;height:16px;background:#e6e4da"><svg class="a" style="left:3px;top:7px" width="7" height="4"><path d="M0 0h7l-3.5 4z" fill="#222"/></svg></div>
 </div>
 <div class="a" style="left:3px;top:41px;width:315px;height:209px;background:#fdfdfd;border:2px solid #d2d0c2;overflow:hidden">
  <svg class="a" style="left:-543px;top:-550px" width="860" height="760">
   <g stroke="#e0e0f5" stroke-width="1" fill="none">
    <path d="M547.5 552V751.5M577.5 552V751.5M607.5 552V751.5M637.5 552V751.5M667.5 552V751.5M727.5 552V751.5M757.5 552V751.5M787.5 552V751.5M818.5 552V751.5M848.5 552V751.5"/>
    <path d="M547 552.5H849M547 572.5H849M547 592.5H849M547 612.5H849M547 632.5H849M547 671.5H849M547 691.5H849M547 711.5H849M547 731.5H849M547 751.5H849"/>
   </g>
   <path d="M547 651.5H849M697.5 552V752" stroke="#a8a8a8" fill="none"/>
   <g font-family="Liberation Serif" font-weight="bold" font-size="10" fill="#3a9898">
    <text x="551" y="563">400.0</text>
    <text x="545" y="748">0</text><text x="605" y="748">20</text><text x="666" y="748">40</text><text x="726" y="748">60</text><text x="786" y="748">80</text><text x="827" y="748">100</text>
   </g>
   <path d="M548 750.5L750 548.5" stroke="#6fa08e" stroke-width="1.7"/>
   <circle cx="547.5" cy="751" r="3.3" fill="#000"/>
  </svg>
 </div>
</div>
<!-- PARTICLE PROPERTY -->
<div class="a win" style="left:680px;top:414px;width:322px;height:257px">
 <div class="a ttl" style="left:2px;top:2px;width:316px;height:15px"><span class="a" style="left:2px;top:2px;letter-spacing:-0.6px">Particle Property</span>
  <div class="a" style="left:303px;top:1.5px;width:11px;height:11px;background:#f2f1ea"><svg class="a" style="left:2.5px;top:2.5px" width="7" height="7"><path d="M1 1l5 5M6 1l-5 5" stroke="#111" stroke-width="1.7"/></svg></div></div>
 <div class="a" style="left:3px;top:17px;width:316px;height:237px;background:#f5f4ef"></div>
 <div class="a grp" style="left:15px;top:34px;width:291px;height:30px"></div>
 <div class="a glbl" style="left:20px;top:26px">Time</div>
 <div class="a dl" style="left:24.5px;top:41px">Start</div>
 <div class="a fld" style="left:52px;top:41px;width:46px;line-height:13px">0,160000</div>
 <div class="a dl" style="left:105.5px;top:40px">End</div>
 <div class="a fld" style="left:129px;top:41px;width:46px;line-height:13px">3,300000</div>
 <div class="a cb" style="left:187px;top:43px"><svg class="a" style="left:1px;top:1px" width="9" height="9"><path d="M1.5 4.5l2 2.5l4-5" stroke="#21a121" stroke-width="1.6" fill="none"/></svg></div>
 <div class="a dl" style="left:201.5px;top:41px">Loop</div>
 <div class="a" style="left:226px;top:40.5px;width:49px;height:15px;border:1px solid #6e6c60;background:#f6f5f0"><span class="a dl" style="left:6px;top:-2px">Refresh</span></div>
 <div class="a grp" style="left:15px;top:72px;width:291px;height:125px"></div>
 <div class="a glbl" style="left:19.5px;top:64px">Particle</div>
 <div class="a cb" style="left:30px;top:81.5px"></div><div class="a dl" style="left:44px;top:78px">Single Particle</div>
 <div class="a cb" style="left:114px;top:81.5px"></div><div class="a dl" style="left:129px;top:78px">In</div>
 <div class="a cb" style="left:146px;top:81.5px"></div><div class="a dl" style="left:161px;top:78px">Out</div>
 <div class="a dl" style="left:30px;top:94px">Volume</div>
 <div class="a" style="left:76px;top:97px;width:125px;height:13px;background:#fdfdfb"><span class="a dl" style="left:2px;top:-2.5px">Cylinder</span><div class="a" style="left:113px;top:1px;width:11px;height:11px;background:#ecebe4"></div><svg class="a" style="left:115.5px;top:5px" width="6" height="4"><path d="M0 0h6l-3 3.5z" fill="#222"/></svg></div>
 <div class="a" style="left:30px;top:115px;width:230px;height:60px;background:#fcfcfc;border:1px solid #b4c0d4"></div>
 <svg class="a" style="left:47px;top:117px" width="26" height="26"><defs><linearGradient id="bl" x1="0" y1="0" x2="1" y2="1"><stop offset="0" stop-color="#2a70d8"/><stop offset=".5" stop-color="#4a98f0"/><stop offset="1" stop-color="#8ac8ff"/></linearGradient></defs><circle cx="13" cy="13" r="11.5" fill="url(#bl)" stroke="#1a3a8a" stroke-width="1"/><path d="M4.5 10h7.5v-5.2l8.2 8.2l-8.2 8.2v-5.2h-7.5z" fill="#f8dc58" stroke="#5a4a20" stroke-width="0.9" stroke-linejoin="round"/></svg>
 <svg class="a" style="left:107px;top:117px" width="26" height="26"><circle cx="13" cy="13" r="11.5" fill="url(#bl)" stroke="#1a3a8a" stroke-width="1"/><path d="M4.5 10h7.5v-5.2l8.2 8.2l-8.2 8.2v-5.2h-7.5z" fill="#f8dc58" stroke="#5a4a20" stroke-width="0.9" stroke-linejoin="round"/></svg>
 <div class="a dl" style="left:45px;top:143.5px">Radius</div>
 <div class="a dl" style="left:106px;top:143.5px">Height</div>
 <div class="a grp" style="left:15px;top:197px;width:291px;height:45px"></div>
 <div class="a" style="left:30px;top:205px;width:228px;height:14px;background:#fdfdfb"><span class="a dl" style="left:2px;top:-2px">gbparticleadd</span><div class="a" style="left:216px;top:1px;width:12px;height:12px;background:#ecebe4"></div><svg class="a" style="left:219px;top:5px" width="6" height="4"><path d="M0 0h6l-3 3.5z" fill="#222"/></svg></div>
</div>
</body></html>
